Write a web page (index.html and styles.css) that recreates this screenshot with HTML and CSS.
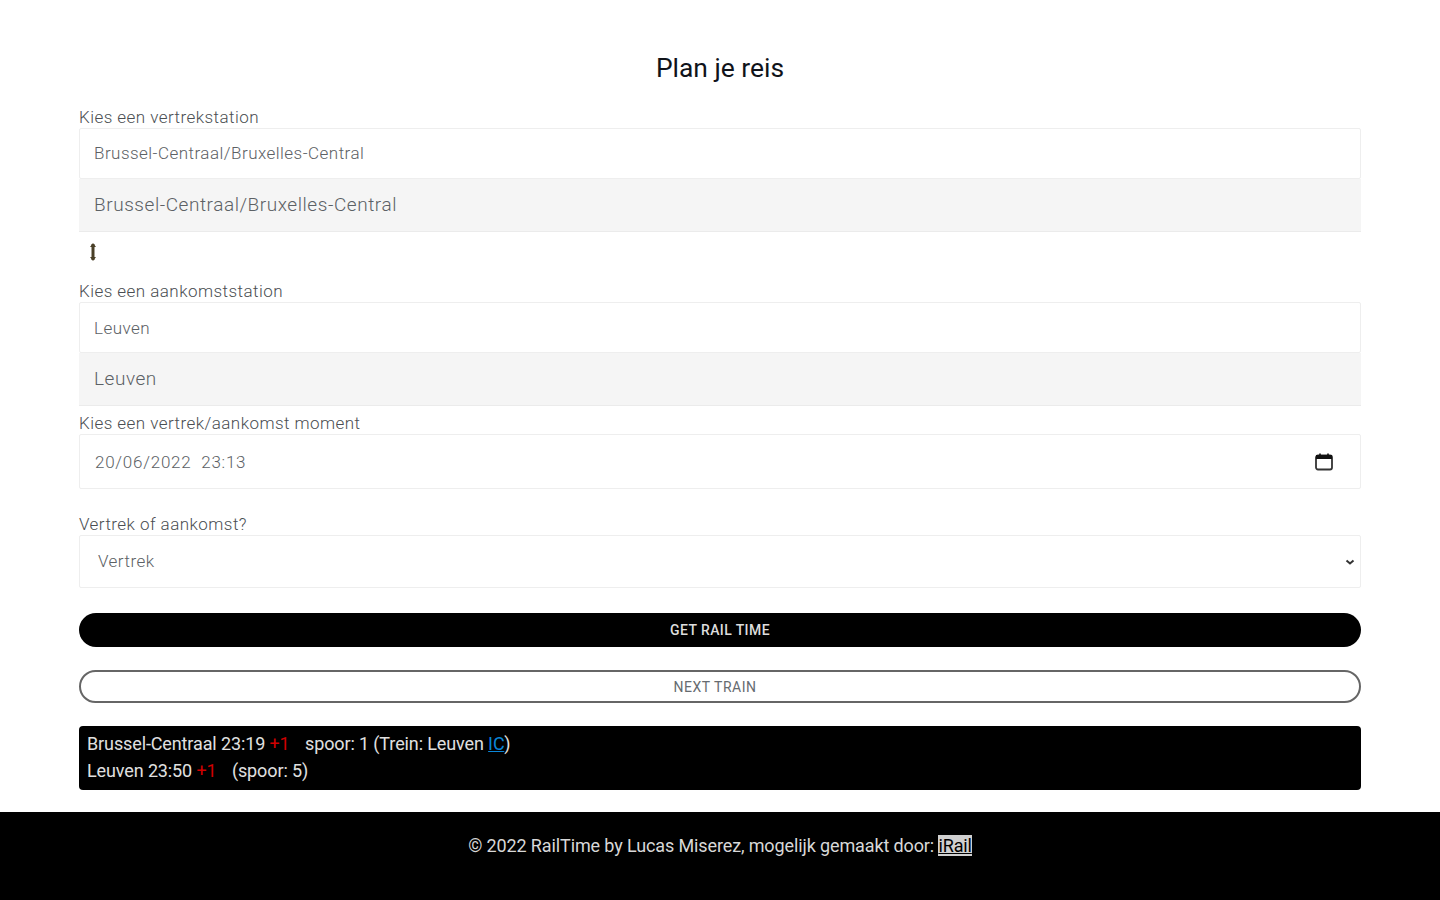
FILE: index.html
```html
<!DOCTYPE html>
<html lang="nl">
<head>
<meta charset="utf-8">
<title>RailTime</title>
<link rel="stylesheet" href="styles.css">
</head>
<body>
<main class="page">
  <h1 class="title">Plan je reis</h1>
  <form class="form">
    <label class="label">Kies een vertrekstation</label>
    <div class="field field-first">Brussel-Centraal/Bruxelles-Central</div>
    <div class="match">Brussel-Centraal/Bruxelles-Central</div>
    <div class="swap">
      <svg width="8" height="20" viewBox="0 0 8 20" aria-hidden="true"><path d="M4 2v16" stroke="#4a4028" stroke-width="3" fill="none"/><path d="M1 5 4 1l3 4zM1 15l3 4 3-4z" fill="#4a4028"/></svg>
    </div>
    <label class="label label-arrive">Kies een aankomststation</label>
    <div class="field">Leuven</div>
    <div class="match">Leuven</div>
    <label class="label label-moment">Kies een vertrek/aankomst moment</label>
    <div class="field field-date">
      <span class="date-text">20/06/2022&nbsp; 23:13</span>
      <svg class="cal" width="20" height="20" viewBox="0 0 20 20" aria-hidden="true"><rect x="2" y="3.500" width="16" height="14" rx="2" fill="none" stroke="#333" stroke-width="1.800"/><rect x="2" y="3" width="16" height="4" fill="#111"/><path d="M6 1.500v2M14 1.500v2" stroke="#111" stroke-width="1.600"/></svg>
    </div>
    <label class="label label-type">Vertrek of aankomst?</label>
    <div class="field field-select">
      <span>Vertrek</span>
      <svg class="chev" width="10" height="6" viewBox="0 0 10 6" aria-hidden="true"><path d="M1.500 1.500l3.500 3 3.500-3" fill="none" stroke="#333" stroke-width="2"/></svg>
    </div>
    <button type="button" class="btn btn-solid">GET RAIL TIME</button>
    <button type="button" class="btn btn-outline">NEXT TRAIN</button>
  </form>
  <section class="result">
    <div>Brussel-Centraal 23:19 <span class="late">+1</span> <span class="gap">spoor: 1 (Trein: Leuven <a class="train" href="#">IC</a>)</span></div>
    <div>Leuven 23:50 <span class="late">+1</span> <span class="gap">(spoor: 5)</span></div>
  </section>
</main>
<footer class="footer">
  <p>© 2022 RailTime by Lucas Miserez, mogelijk gemaakt door: <a class="irail" href="#">iRail</a></p>
</footer>
</body>
</html>
```
FILE: styles.css
```css
* { box-sizing: border-box; }
html, body { margin: 0; padding: 0; }
body {
  font-family: Roboto, "Liberation Sans", sans-serif;
  font-weight: 300;
  color: #212529;
  background: #fff;
  height: 900px;
  overflow: hidden;
  display: flex;
  flex-direction: column;
}
.page { padding: 0 79px; height: 812px; }
.title {
  margin: 0;
  padding-top: 51px;
  height: 107px;
  font-size: 26.400px;
  line-height: 34px;
  font-weight: 400;
  text-align: center;
  color: #10131a;
}
.form { display: flex; flex-direction: column; }
.label {
  display: block;
  font-size: 17px;
  line-height: 21px;
  letter-spacing: .45px;
  color: #4a4e52;
}
.field {
  height: 51px;
  padding-left: 14px;
  display: flex;
  align-items: center;
  font-size: 17px;
  letter-spacing: .47px;
  color: #5c6165;
  background: #fff;
  border: 1px solid #eeeeee;
  border-radius: 2px;
}
.field-first { padding-bottom: 2px; }
.match {
  height: 53px;
  padding: 0 0 2px 15px;
  display: flex;
  align-items: center;
  font-size: 19px;
  letter-spacing: .55px;
  color: #5c6165;
  background: #f5f5f5;
  border-bottom: 1px solid #ebebeb;
}
.swap { height: 48px; padding: 10px 0 0 10px; display: flex; align-items: flex-start; }
.label-arrive { margin-top: 1px; }
.label-moment { margin-top: 7px; }
.field-date { height: 55px; justify-content: space-between; padding: 0 26px 0 15px; letter-spacing: .75px; }
.label-type { margin-top: 25px; }
.field-select { height: 53px; justify-content: space-between; padding: 0 5px 2px 18px; }
.chev { margin-top: 2px; }
.btn {
  display: block;
  width: 100%;
  font-family: inherit;
  font-size: 14px;
  text-transform: uppercase;
  border-radius: 17px;
  padding: 0;
  cursor: pointer;
}
.btn-solid {
  margin-top: 25px;
  height: 34px;
  background: #000;
  color: #ddd;
  border: 0;
  font-weight: 500;
  letter-spacing: .4px;
}
.btn-outline {
  margin-top: 23px;
  height: 33px;
  background: #fff;
  color: #666b70;
  border: 2px solid #666;
  padding-right: 10px;
  letter-spacing: .5px;
}
.result {
  margin-top: 23px;
  height: 64px;
  padding: 5px 8px;
  background: #000;
  color: #e0e0e0;
  border-radius: 4px;
  font-size: 18px;
  font-weight: 400;
  line-height: 26.500px;
  letter-spacing: -.12px;
}
.late { color: #d00000; }
.gap { margin-left: 11px; }
.train { color: #0a86d8; }
.footer {
  height: 88px;
  padding-top: 22px;
  background: #000;
  color: #d8d8d8;
  text-align: center;
  font-size: 18px;
  font-weight: 400;
  letter-spacing: -.12px;
}
.footer p { margin: 0; line-height: 24px; }
.irail { color: #000; background: #d0d0d0; text-decoration: underline; }
```
